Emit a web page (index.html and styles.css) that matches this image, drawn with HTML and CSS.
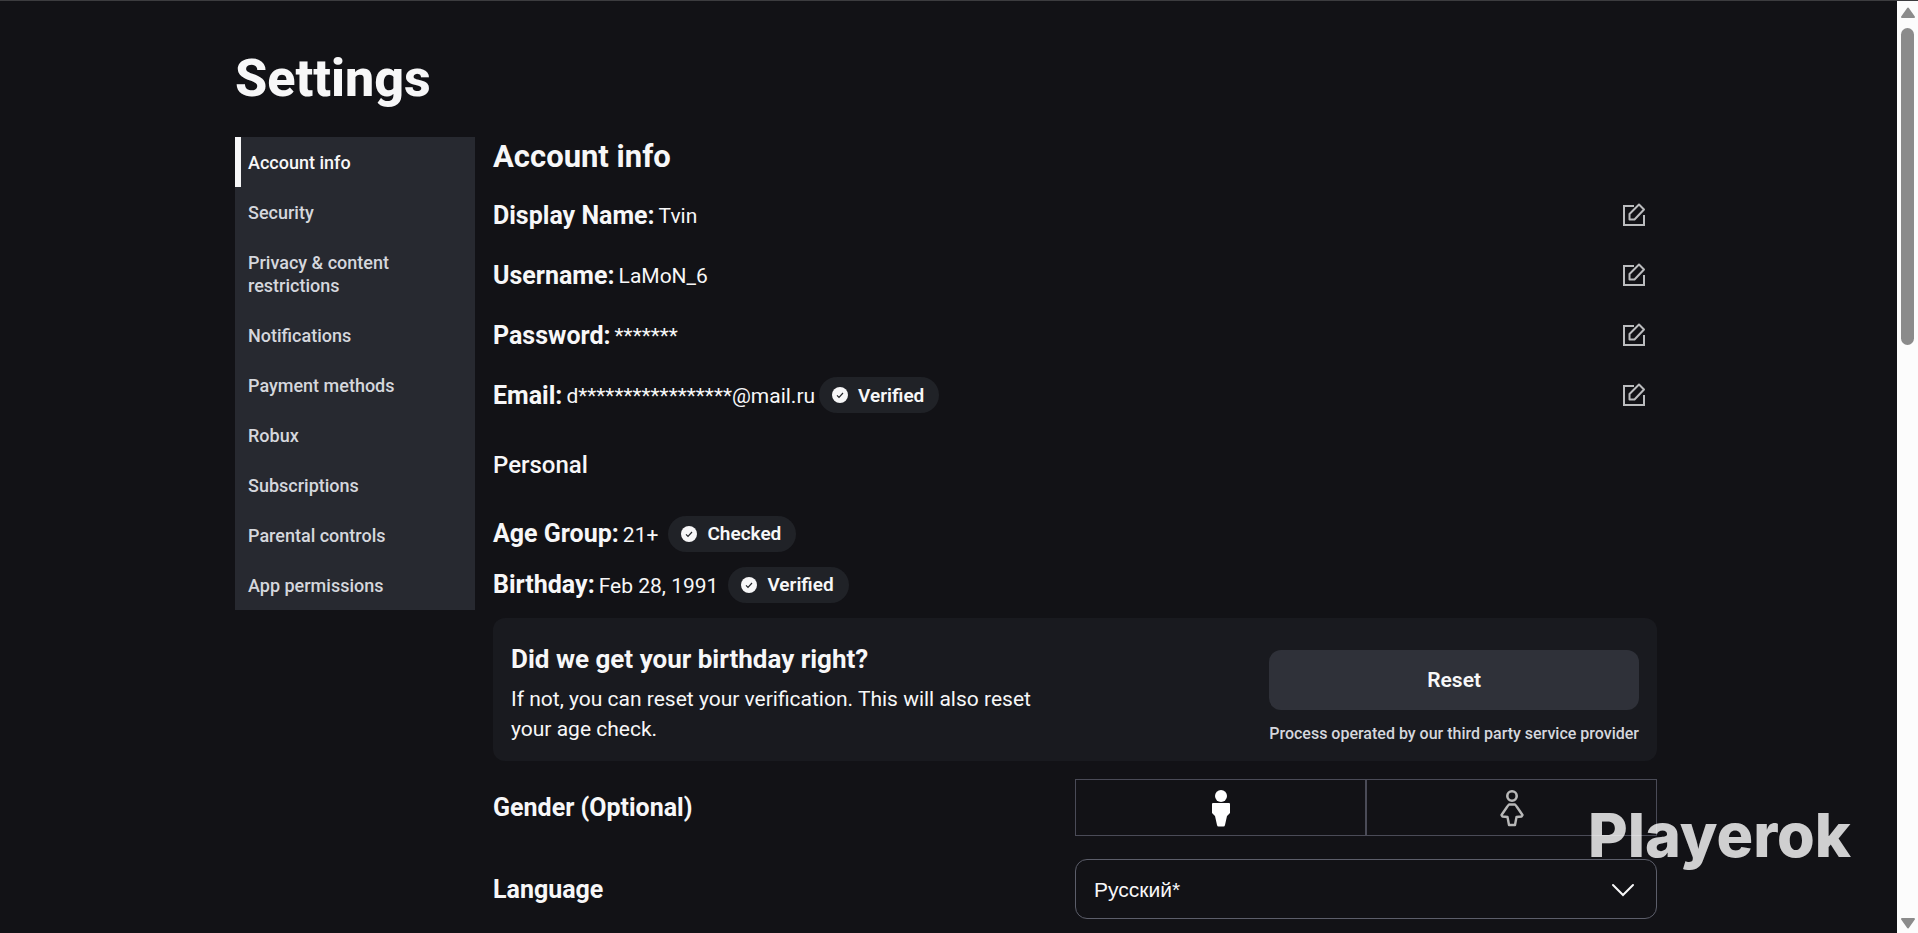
FILE: index.html
```html
<!DOCTYPE html>
<html lang="en">
<head>
  <meta charset="UTF-8" />
  <meta name="viewport" content="width=device-width, initial-scale=1" />
  <title>Settings</title>
  <link rel="stylesheet" href="styles.css">
</head>
<body>

  <!-- Shared icons -->
  <svg class="sprite" aria-hidden="true">
    <symbol id="icon-edit" viewBox="0 0 24 24">
      <path d="M12 3H2v19h20v-10" fill="none" stroke="currentColor" stroke-width="2" />
      <path d="M7.500 16.500v-5.500l9.500-9.500 5 5L12.500 16.500z" fill="none" stroke="currentColor" stroke-width="2" stroke-linejoin="round" />
    </symbol>
    <symbol id="icon-check" viewBox="0 0 16 16">
      <circle cx="8" cy="8" r="8" fill="currentColor" />
      <path d="M5 8.300l2 2 4-4.300" fill="none" stroke="#202227" stroke-width="1.200" />
    </symbol>
  </svg>

  <div class="page">
    <main class="settings">
      <h1>Settings</h1>

      <div class="columns">
        <nav class="menu">
          <a class="menu-item active" href="#">Account info</a>
          <a class="menu-item" href="#">Security</a>
          <a class="menu-item" href="#">Privacy &amp; content restrictions</a>
          <a class="menu-item" href="#">Notifications</a>
          <a class="menu-item" href="#">Payment methods</a>
          <a class="menu-item" href="#">Robux</a>
          <a class="menu-item" href="#">Subscriptions</a>
          <a class="menu-item" href="#">Parental controls</a>
          <a class="menu-item" href="#">App permissions</a>
        </nav>

        <section class="content">
          <h2>Account info</h2>

          <div class="row">
            <span class="label">Display Name:</span>
            <span class="value">Tvin</span>
            <button class="edit" aria-label="Edit display name"><svg><use href="#icon-edit" /></svg></button>
          </div>
          <div class="row">
            <span class="label">Username:</span>
            <span class="value">LaMoN_6</span>
            <button class="edit" aria-label="Edit username"><svg><use href="#icon-edit" /></svg></button>
          </div>
          <div class="row">
            <span class="label">Password:</span>
            <span class="value">*******</span>
            <button class="edit" aria-label="Edit password"><svg><use href="#icon-edit" /></svg></button>
          </div>
          <div class="row">
            <span class="label">Email:</span>
            <span class="value">d*****************@mail.ru</span>
            <span class="badge"><svg><use href="#icon-check" /></svg>Verified</span>
            <button class="edit" aria-label="Edit email"><svg><use href="#icon-edit" /></svg></button>
          </div>

          <h3>Personal</h3>

          <div class="row compact">
            <span class="label">Age Group:</span>
            <span class="value">21+</span>
            <span class="badge spaced"><svg><use href="#icon-check" /></svg>Checked</span>
          </div>
          <div class="row compact">
            <span class="label">Birthday:</span>
            <span class="value">Feb 28, 1991</span>
            <span class="badge spaced"><svg><use href="#icon-check" /></svg>Verified</span>
          </div>

          <div class="card">
            <div class="card-text">
              <h4>Did we get your birthday right?</h4>
              <p>If not, you can reset your verification. This will also reset your age check.</p>
            </div>
            <div class="card-action">
              <button class="reset">Reset</button>
              <small>Process operated by our third party service provider</small>
            </div>
          </div>

          <div class="field">
            <span class="label" id="genderLabel">Gender (Optional)</span>
            <div class="gender" role="group" aria-labelledby="genderLabel">
              <button class="gender-option selected" aria-label="Male">
                <svg viewBox="0 0 24 38">
                  <circle cx="12" cy="7" r="6" fill="currentColor" />
                  <path d="M4 14h16q1 0 1 1v9l-3 3-2 9q-.3 1.500-1.500 1.500h-5q-1.200 0-1.500-1.500l-2-9-3-3v-9q0-1 1-1z" fill="currentColor" />
                </svg>
              </button>
              <button class="gender-option" aria-label="Female">
                <svg viewBox="0 0 24 38">
                  <circle cx="12" cy="7" r="4.700" fill="none" stroke="currentColor" stroke-width="2.600" />
                  <path d="M9 15.500h6q1 1 2 2.500l5.500 8-1 1.500-5 .5-1.500 8H9l-1.500-8-5-.5-1-1.500L7 18q1-1.500 2-2.500z" fill="none" stroke="currentColor" stroke-width="2.400" stroke-linejoin="round" />
                </svg>
              </button>
            </div>
          </div>

          <div class="field">
            <label class="label" for="language">Language</label>
            <div class="select">
              <select id="language">
                <option>Русский*</option>
              </select>
              <svg viewBox="0 0 24 16"><path d="M2 3l10 10L22 3" fill="none" stroke="currentColor" stroke-width="2" stroke-linecap="round" /></svg>
            </div>
          </div>
        </section>
      </div>
    </main>

    <div class="scrollbar" aria-hidden="true">
      <svg viewBox="0 0 16 12"><path d="M8 1.500L14 10H2z" fill="currentColor" stroke="currentColor" stroke-width="2" stroke-linejoin="round" /></svg>
      <div class="thumb"></div>
      <svg viewBox="0 0 16 12"><path d="M8 10.500L14 2H2z" fill="currentColor" stroke="currentColor" stroke-width="2" stroke-linejoin="round" /></svg>
    </div>
  </div>

  <div class="watermark">Playerok</div>
</body>
</html>
```
FILE: styles.css
```css
* {
  box-sizing: border-box;
}
body {
  margin: 0;
  background: #121216;
  color: #f7f7f8;
  font-family: Roboto, 'Liberation Sans', sans-serif;
  font-size: 21px;
  overflow: hidden;
}
h1, h2, h3, h4, p {
  margin: 0;
}
button {
  font-family: inherit;
  color: inherit;
  cursor: pointer;
}
.sprite {
  display: none;
}
.page {
  display: flex;
  height: 100vh;
  border-top: 1px solid #3c3c3f;
}
.settings {
  flex: 1;
  padding: 48px 240px 0 235px;
}
h1 {
  font-size: 52px;
  font-weight: 800;
  line-height: 60px;
  margin-bottom: 28px;
}
.columns {
  display: flex;
  align-items: flex-start;
  gap: 18px;
}

/* Left menu */
.menu {
  width: 240px;
  flex-shrink: 0;
  background: #272930;
}
.menu-item {
  display: block;
  padding: 14px 56px 13px 13px;
  font-size: 18px;
  font-weight: 500;
  line-height: 23px;
  color: #d5d7dd;
  text-decoration: none;
}
.menu-item.active {
  padding-left: 7px;
  border-left: 6px solid #f7f7f8;
  color: #f7f7f8;
}

/* Content */
.content {
  flex: 1;
}
h2 {
  font-size: 31px;
  font-weight: 700;
  line-height: 40px;
  margin-bottom: 8px;
}
h3 {
  font-size: 24px;
  font-weight: 500;
  line-height: 30px;
  margin: 25px 0 28px;
}
.row {
  display: flex;
  align-items: center;
  gap: 4px;
  height: 60px;
}
.row.compact {
  height: 51px;
}
.label {
  font-size: 25px;
  font-weight: 700;
}
.value {
  padding-top: 2px;
}
.edit {
  margin-left: auto;
  margin-right: 11px;
  padding: 0;
  border: none;
  background: none;
  color: #bbbcbe;
  display: flex;
}
.edit svg {
  width: 24px;
  height: 24px;
}
.badge {
  display: flex;
  align-items: center;
  gap: 10px;
  height: 36px;
  padding: 0 15px 0 13px;
  border-radius: 18px;
  background: #202227;
  font-size: 19px;
  font-weight: 600;
}
.badge.spaced {
  margin-left: 6px;
}
.badge svg {
  width: 16px;
  height: 16px;
}

.card {
  display: flex;
  justify-content: space-between;
  align-items: flex-end;
  padding: 24px 18px 17px;
  margin: 8px 0 18px;
  border-radius: 12px;
  background: #191a1f;
}
.card-text {
  width: 550px;
}
.card h4 {
  font-size: 26px;
  font-weight: 700;
  line-height: 35px;
  margin-bottom: 7px;
}
.card p {
  line-height: 30px;
}
.card-action {
  display: flex;
  flex-direction: column;
  gap: 14px;
}
.reset {
  height: 60px;
  border: none;
  border-radius: 12px;
  background: #2f3139;
  font-size: 21px;
  font-weight: 600;
}
.card small {
  font-size: 16px;
  font-weight: 500;
  line-height: 20px;
  color: #d5d7dd;
}

.field {
  display: flex;
  align-items: center;
  margin-bottom: 23px;
}
.field .label,
.gender,
.select {
  flex: 1;
}
.gender {
  display: flex;
}
.gender-option {
  flex: 1;
  height: 57px;
  border: 1px solid #4a4b57;
  background: none;
  color: #b8b8b8;
  display: flex;
  align-items: center;
  justify-content: center;
}
.gender-option.selected {
  color: #fff;
}
.gender-option svg {
  width: 24px;
  height: 38px;
}
.select {
  position: relative;
}
.select select {
  appearance: none;
  width: 100%;
  height: 60px;
  padding: 0 18px;
  border: 1px solid #5c5e6a;
  border-radius: 12px;
  background: none;
  color: inherit;
  font-family: 'Liberation Sans', Arial, sans-serif;
  font-size: 21px;
}
.select svg {
  position: absolute;
  right: 22px;
  top: 23px;
  width: 24px;
  height: 16px;
  pointer-events: none;
}

/* Scrollbar */
.scrollbar {
  width: 21px;
  background: #fcfcfc;
  color: #8b8b8b;
  display: flex;
  flex-direction: column;
  align-items: center;
  padding: 6px 0 4px;
}
.scrollbar svg {
  width: 16px;
  height: 12px;
}
.thumb {
  width: 13px;
  height: 34vh;
  margin: 9px 0 auto;
  border-radius: 7px;
  background: #8b8b8b;
}

.watermark {
  position: fixed;
  right: 67px;
  bottom: 60px;
  font-family: Inter, sans-serif;
  font-size: 61px;
  font-weight: 800;
  line-height: 76px;
  color: rgba(255, 255, 255, 0.8);
  pointer-events: none;
}
```
